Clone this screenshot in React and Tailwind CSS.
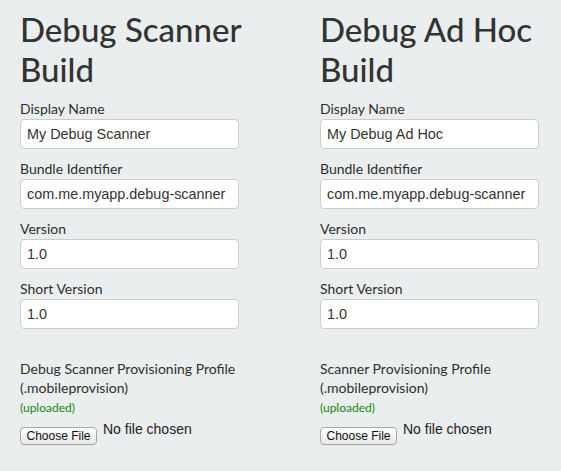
// App.jsx
const fields = {
  scanner: [
    { label: "Display Name", value: "My Debug Scanner" },
    { label: "Bundle Identifier", value: "com.me.myapp.debug-scanner" },
    { label: "Version", value: "1.0" },
    { label: "Short Version", value: "1.0" },
  ],
  adhoc: [
    { label: "Display Name", value: "My Debug Ad Hoc" },
    { label: "Bundle Identifier", value: "com.me.myapp.debug-scanner" },
    { label: "Version", value: "1.0" },
    { label: "Short Version", value: "1.0" },
  ],
};

function Field({ label, value }) {
  return (
    <div className="mb-[10px]">
      <label className="block text-[14px] leading-[20px] text-[#2e2e2e]">{label}</label>
      <input
        readOnly
        value={value}
        className="block w-[219px] h-[30px] px-[6px] bg-white border border-[#ccc] rounded-[4px] text-[14.4px] text-[#333] outline-none font-['Liberation_Sans',Arial,sans-serif]"
      />
    </div>
  );
}

// Fake file picker, the native one renders differently in headless chrome
function FilePicker() {
  return (
    <div className="flex items-start mt-[10px]">
      <button className="h-[18px] w-[77px] flex items-center justify-center rounded-[4px] border border-[#a8a8a8] bg-gradient-to-b from-white to-[#e8e8e8] text-[12px] text-[#111] font-['Liberation_Sans',Arial,sans-serif] leading-none shadow-[0_1px_0_rgba(0,0,0,0.05)]">
        Choose File
      </button>
      <span className="ml-[6px] -mt-[8px] text-[14px] leading-[20px] text-[#222] font-['Liberation_Sans',Arial,sans-serif]">
        No file chosen
      </span>
    </div>
  );
}

function BuildColumn({ title, items, profileLabel }) {
  return (
    <div className="pl-5">
      <h1 className="w-[240px] text-[33px] leading-[40px] text-[#333] font-medium mb-[10px]">
        {title}
      </h1>
      {items.map((f) => (
        <Field key={f.label} {...f} />
      ))}

      {/* Provisioning profile upload */}
      <div className="mt-[30px] w-[240px]">
        <label className="block text-[14px] leading-[19px] text-[#2e2e2e]">
          {profileLabel}
        </label>
        <div className="text-[12px] leading-[18px] mt-[2px] text-[#118811]">(uploaded)</div>
        <FilePicker />
      </div>
    </div>
  );
}

export default function App() {
  return (
    <div className="min-h-screen w-full overflow-hidden bg-[#ebeeef] font-['Lato','Open_Sans',sans-serif]">
      <div className="grid grid-cols-[300px_1fr] pt-[9px]">
        <BuildColumn
          title="Debug Scanner Build"
          items={fields.scanner}
          profileLabel="Debug Scanner Provisioning Profile (.mobileprovision)"
        />
        <BuildColumn
          title="Debug Ad Hoc Build"
          items={fields.adhoc}
          profileLabel="Scanner Provisioning Profile (.mobileprovision)"
        />
      </div>
    </div>
  );
}
